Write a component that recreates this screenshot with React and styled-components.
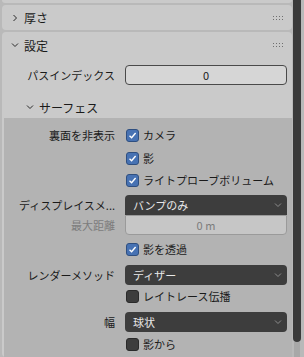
import React from 'react';
import styled, { createGlobalStyle } from 'styled-components';

const Global = createGlobalStyle`
  html, body {
    margin: 0;
    padding: 0;
    background: #b9b9b9;
  }
  body {
    font-family: "Noto Sans CJK JP", "Noto Sans", sans-serif;
    font-size: 11px;
    color: #1a1a1a;
  }
`;

const Screen = styled.div`
  display: flex;
  width: 304px;
  height: 357px;
  overflow: hidden;
  background: #b9b9b9;
`;

const Main = styled.div`
  flex: 1;
  display: flex;
  flex-direction: column;
  gap: 2px;
  padding: 0 1px 0 2px;
  min-width: 0;
`;

const ScrollCol = styled.div`
  width: 11px;
  display: flex;
  flex-direction: column;
  padding-left: 0;
`;

const Thumb = styled.div`
  width: 8px;
  height: 342px;
  background: #3a3a3a;
  border-radius: 0 0 4px 4px;
`;

const Track = styled.div`
  width: 6px;
  margin-left: 1px;
  flex: 1;
  background: #a8a8a8;
`;

const PrevPanel = styled.div`
  height: 3px;
  background: #cacaca;
  border-radius: 0 0 4px 4px;
`;

const Panel = styled.div`
  background: #cacaca;
  border-radius: 4px;
  display: flex;
  flex-direction: column;
  flex: ${(p) => (p.grow ? 1 : 'none')};
`;

const Header = styled.div`
  display: flex;
  align-items: center;
  height: ${(p) => p.h || 25}px;
  padding-left: ${(p) => p.indent || 9}px;
  padding-right: 8px;
  font-size: 12px;
  color: #1a1a1a;
  & > span {
    margin-left: 5px;
    flex: 1;
  }
`;

const Body = styled.div`
  display: flex;
  flex-direction: column;
  flex: 1;
  padding-top: 7px;
`;

const SubBody = styled.div`
  background: #b3b3b3;
  margin-left: 2px;
  flex: 1;
  padding-top: 7px;
  display: flex;
  flex-direction: column;
`;

const Row = styled.div`
  display: grid;
  grid-template-columns: 1fr 162px;
  column-gap: 10px;
  padding-right: 5px;
  margin-top: ${(p) => p.mt || 0}px;
  height: ${(p) => p.h || 20}px;
  align-items: center;
`;

const Label = styled.div`
  text-align: right;
  white-space: nowrap;
  color: ${(p) => (p.dim ? '#7c7c7c' : '#1a1a1a')};
  line-height: 20px;
`;

const NumField = styled.div`
  height: 100%;
  box-sizing: border-box;
  border: 1px solid ${(p) => (p.muted ? '#9a9a9a' : '#4a4a4a')};
  background: ${(p) => (p.muted ? '#c6c6c6' : '#d6d6d6')};
  border-radius: ${(p) => (p.joined ? '0 0 4px 4px' : '4px')};
  color: ${(p) => (p.muted ? '#7c7c7c' : '#1a1a1a')};
  display: flex;
  align-items: center;
  justify-content: center;
`;

const Dropdown = styled.div`
  height: 100%;
  box-sizing: border-box;
  background: #3d3d3d;
  color: #e8e8e8;
  border-radius: ${(p) => (p.joined ? '4px 4px 0 0' : '4px')};
  display: flex;
  align-items: center;
  padding: 0 5px 0 8px;
  & > span {
    flex: 1;
  }
`;

const Check = styled.label`
  grid-column: 2;
  display: flex;
  align-items: center;
  gap: 4px;
  padding-left: 1px;
  white-space: nowrap;
`;

const Box = styled.span`
  width: 13px;
  height: 13px;
  box-sizing: border-box;
  border-radius: 3px;
  border: 1px solid ${(p) => (p.on ? '#2f4f80' : '#2a2a2a')};
  background: ${(p) => (p.on ? '#4772b3' : '#3d3d3d')};
  display: flex;
  align-items: center;
  justify-content: center;
`;

function Chevron({ open, color = '#2a2a2a' }) {
  return (
    <svg width="8" height="8" viewBox="0 0 8 8">
      {open ? (
        <polyline points="1,2.5 4,5.5 7,2.5" fill="none" stroke={color} strokeWidth="1" />
      ) : (
        <polyline points="2.5,1 5.5,4 2.5,7" fill="none" stroke={color} strokeWidth="1" />
      )}
    </svg>
  );
}

function Grip() {
  const dots = [];
  for (let r = 0; r < 2; r += 1) {
    for (let c = 0; c < 4; c += 1) {
      dots.push(<rect key={`${r}-${c}`} x={c * 3} y={r * 3} width="1" height="1" fill="#6f6f6f" />);
    }
  }
  return (
    <svg width="11" height="4" viewBox="0 0 11 4">
      {dots}
    </svg>
  );
}

function CheckBox({ on, children }) {
  return (
    <Check>
      <Box on={on}>
        {on && (
          <svg width="9" height="9" viewBox="0 0 9 9">
            <polyline points="1.5,4.8 3.6,6.8 7.6,2" fill="none" stroke="#fff" strokeWidth="1.4" />
          </svg>
        )}
      </Box>
      {children}
    </Check>
  );
}

function Select({ value, joined }) {
  return (
    <Dropdown joined={joined}>
      <span>{value}</span>
      <Chevron open color="#8c8c8c" />
    </Dropdown>
  );
}

export default function App() {
  return (
    <Screen>
      <Global />
      <Main>
        <PrevPanel />
        <Panel>
          <Header>
            <Chevron />
            <span>厚さ</span>
            <Grip />
          </Header>
        </Panel>
        <Panel grow>
          <Header h={26}>
            <Chevron open />
            <span>設定</span>
            <Grip />
          </Header>
          <Body>
            <Row>
              <Label>パスインデックス</Label>
              <NumField>0</NumField>
            </Row>
            <Header h={22} indent={24} style={{ marginTop: 11 }}>
              <Chevron open />
              <span>サーフェス</span>
            </Header>
            <SubBody>
              <Row>
                <Label>裏面を非表示</Label>
                <CheckBox on>カメラ</CheckBox>
              </Row>
              <Row mt={3}>
                <CheckBox on>影</CheckBox>
              </Row>
              <Row mt={2}>
                <CheckBox on>ライトプローブボリューム</CheckBox>
              </Row>
              <Row mt={5}>
                <Label>ディスプレイスメ...</Label>
                <Select value="バンプのみ" joined />
              </Row>
              <Row h={20}>
                <Label dim>最大距離</Label>
                <NumField muted joined>0 m</NumField>
              </Row>
              <Row mt={4}>
                <CheckBox on>影を透過</CheckBox>
              </Row>
              <Row mt={6}>
                <Label>レンダーメソッド</Label>
                <Select value="ディザー" />
              </Row>
              <Row mt={1}>
                <CheckBox>レイトレース伝播</CheckBox>
              </Row>
              <Row mt={6}>
                <Label>幅</Label>
                <Select value="球状" />
              </Row>
              <Row mt={2}>
                <CheckBox>影から</CheckBox>
              </Row>
            </SubBody>
          </Body>
        </Panel>
      </Main>
      <ScrollCol>
        <Thumb />
        <Track />
      </ScrollCol>
    </Screen>
  );
}
